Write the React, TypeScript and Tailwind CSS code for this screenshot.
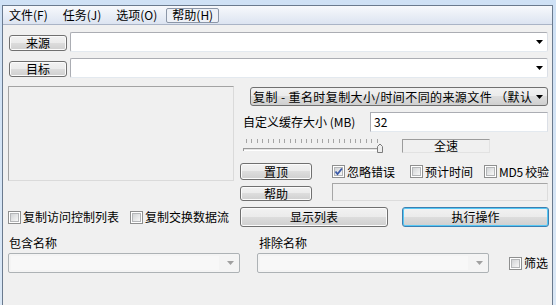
import React from 'react';

const btnCls =
  'flex items-center justify-center whitespace-nowrap rounded-[3px] border border-[#707070] bg-[linear-gradient(#f2f2f2_0%,#ebebeb_49%,#dddddd_50%,#cfcfcf_100%)] shadow-[inset_0_0_0_1px_#fbfbfb] leading-none';

function Btn({ children, className = '' }: { children: React.ReactNode; className?: string }) {
  return <div className={`${btnCls} ${className}`}>{children}</div>;
}

function Arrow({ color = '#000' }: { color?: string }) {
  return (
    <svg width="7" height="4" viewBox="0 0 7 4" className="shrink-0">
      <polygon points="0,0 7,0 3.5,4" fill={color} />
    </svg>
  );
}

function Combo({ className = '' }: { className?: string }) {
  return (
    <div className={`flex h-[20px] items-center justify-end rounded-[2px] border border-[#abadb3] border-b-[#e3e9ef] border-r-[#dbdfe6] bg-white pr-[4px] ${className}`}>
      <Arrow />
    </div>
  );
}

function DisabledCombo({ className = '' }: { className?: string }) {
  return (
    <div className={`flex h-[20px] shrink-0 items-center rounded-[2px] border border-[#adb2b5] bg-[#f4f4f4] pl-[2px] pr-[5px] ${className}`}>
      <div className="mr-auto h-[14px] w-[208px] bg-[#f8f8f8]" />
      <Arrow color="#a0a0a0" />
    </div>
  );
}

function Check({ checked = false, label, className = '' }: { checked?: boolean; label: string; className?: string }) {
  return (
    <div className={`flex shrink-0 items-center whitespace-nowrap ${className}`}>
      <span className="flex h-[13px] w-[13px] shrink-0 items-center justify-center border border-[#8e8f8f] bg-white">
        <span className="relative h-[9px] w-[9px] border border-[#b4b6b8] bg-[linear-gradient(135deg,#d2d4d6,#f7f7f7)]">
          {checked && (
            <svg width="9" height="9" viewBox="0 0 9 9" className="absolute -left-[1px] -top-[1px]">
              <polyline points="1.5,4.5 3.5,7 8,1.5" fill="none" stroke="#3b5aa8" strokeWidth="1.8" />
            </svg>
          )}
        </span>
      </span>
      <span className="ml-[2px] leading-[14px]">{label}</span>
    </div>
  );
}

function Slider() {
  const ticks = Array.from({ length: 25 }).map((_, i) => 3 + Math.round(i * 5.45));
  return (
    <svg width="140" height="15" viewBox="0 0 140 15">
      {ticks.map((x) => (
        <line key={x} x1={x + 0.5} y1="1" x2={x + 0.5} y2="5" stroke="#a4a4a4" />
      ))}
      <line x1="1" y1="10.5" x2="138" y2="10.5" stroke="#9a9a9a" />
      <line x1="1" y1="11.5" x2="138" y2="11.5" stroke="#e4e4e4" />
      <line x1="1" y1="12.5" x2="138" y2="12.5" stroke="#ffffff" />
      <line x1="0.5" y1="10" x2="0.5" y2="13" stroke="#9a9a9a" />
      <polygon points="134.5,14.5 134.5,8.5 137,6 139.5,8.5 139.5,14.5" fill="#eeeeee" stroke="#7c7c7c" />
    </svg>
  );
}

export default function App() {
  return (
    <div className="h-[305px] w-[556px] overflow-hidden bg-[linear-gradient(#cfe1f5,#dbe8f6)] pl-[2px] pr-[3px] pt-[5px] font-['Noto_Sans_CJK_SC','Noto_Sans',sans-serif] text-[12px] text-black">
      <div className="flex h-[310px] flex-col border-l border-r border-t border-[#6a7a8e] bg-[#f0f0f0]">
        {/* menu bar */}
        <div className="flex h-[19px] items-center gap-[3px] whitespace-nowrap border-b border-[#aab4c6] bg-[linear-gradient(#f7f9fc,#dce4f1)]">
          <span className="px-[6px] leading-[14px]">文件(F)</span>
          <span className="px-[6px] leading-[14px]">任务(J)</span>
          <span className="px-[6px] leading-[14px]">选项(O)</span>
          <span className="flex h-[15px] items-center rounded-[2px] border border-[#8c97a8] bg-[#eef1f7] px-[5px] leading-[14px]">帮助(H)</span>
        </div>

        <div className="flex flex-col pl-[5px] pr-[4px]">
          {/* source / dest */}
          <div className="mt-[7px] flex h-[20px] items-center">
            <Btn className="ml-[1px] mt-[2px] h-[16px] w-[58px] shrink-0">来源</Btn>
            <Combo className="ml-[3px] flex-1" />
          </div>
          <div className="mt-[6px] flex h-[20px] items-center">
            <Btn className="ml-[1px] mt-[2px] h-[16px] w-[58px] shrink-0">目标</Btn>
            <Combo className="ml-[3px] flex-1" />
          </div>

          {/* main area */}
          <div className="mt-[8px] flex">
            <div className="h-[95px] w-[226px] shrink-0 border border-[#a3a3a3] border-b-[#dadada] border-r-[#dadada] bg-[#f0f0f0]" />
            <div className="ml-[6px] flex min-w-0 flex-1 flex-col">
              <div className="ml-[10px] mt-[1px] flex h-[19px] items-center rounded-[3px] border border-[#707070] bg-[linear-gradient(#f2f2f2_0%,#ebebeb_49%,#dddddd_50%,#cfcfcf_100%)] pl-[2px] pr-[4px]">
                <span className="flex-1 whitespace-nowrap leading-[14px] tracking-[0.4px]">复制 - 重名时复制大小/时间不同的来源文件 （默认</span>
                <Arrow />
              </div>
              <div className="mt-[6px] flex h-[20px] items-center">
                <span className="ml-[3px] w-[127px] shrink-0 whitespace-nowrap leading-[14px]">自定义缓存大小 (MB)</span>
                <div className="flex h-[20px] flex-1 items-center border border-[#abadb3] border-b-[#e3e9ef] border-r-[#dbdfe6] bg-white pl-[3px] leading-[14px]">32</div>
              </div>
              <div className="mt-[6px] flex h-[15px] items-center">
                <div className="ml-[3px] shrink-0">
                  <Slider />
                </div>
                <div className="ml-[19px] flex h-[14px] w-[88px] shrink-0 items-center justify-center border border-[#9c9c9c] border-b-[#e2e2e2] border-r-[#e2e2e2] leading-none">全速</div>
              </div>
              <div className="mt-[9px] flex h-[19px] items-center">
                <Btn className="h-[17px] w-[72px] shrink-0">置顶</Btn>
                <Check checked label="忽略错误" className="ml-[20px]" />
                <Check label="预计时间" className="ml-[15px]" />
                <Check label="MD5 校验" className="ml-[11px] tracking-[-0.3px]" />
              </div>
              <div className="mt-[2px] flex h-[18px] items-end">
                <Btn className="h-[15px] w-[72px] shrink-0">帮助</Btn>
                <div className="ml-[20px] h-[18px] flex-1 border border-[#a6a6a6] border-b-[#dcdcdc] border-r-[#dcdcdc]" />
              </div>
            </div>
          </div>

          {/* options row */}
          <div className="mt-[6px] flex h-[20px] items-center">
            <div className="flex w-[232px] shrink-0 items-center">
              <Check label="复制访问控制列表" />
              <Check label="复制交换数据流" className="ml-[11px]" />
            </div>
            <Btn className="h-[20px] w-[148px] shrink-0">显示列表</Btn>
            <div className="ml-[14px] flex h-[20px] w-[147px] shrink-0 items-center justify-center whitespace-nowrap rounded-[3px] border border-[#3c7fb1] bg-[linear-gradient(#f2f2f2_0%,#ebebeb_49%,#dddddd_50%,#cfcfcf_100%)] shadow-[inset_0_0_0_1px_#56c8f5] leading-none">
              执行操作
            </div>
          </div>

          {/* filters */}
          <div className="mt-[9px] flex whitespace-nowrap leading-[14px]">
            <span className="ml-[1px] w-[250px]">包含名称</span>
            <span>排除名称</span>
          </div>
          <div className="mt-[3px] flex items-center">
            <DisabledCombo className="w-[232px]" />
            <DisabledCombo className="ml-[17px] w-[232px]" />
            <Check label="筛选" className="ml-[20px]" />
          </div>
        </div>
      </div>
    </div>
  );
}
